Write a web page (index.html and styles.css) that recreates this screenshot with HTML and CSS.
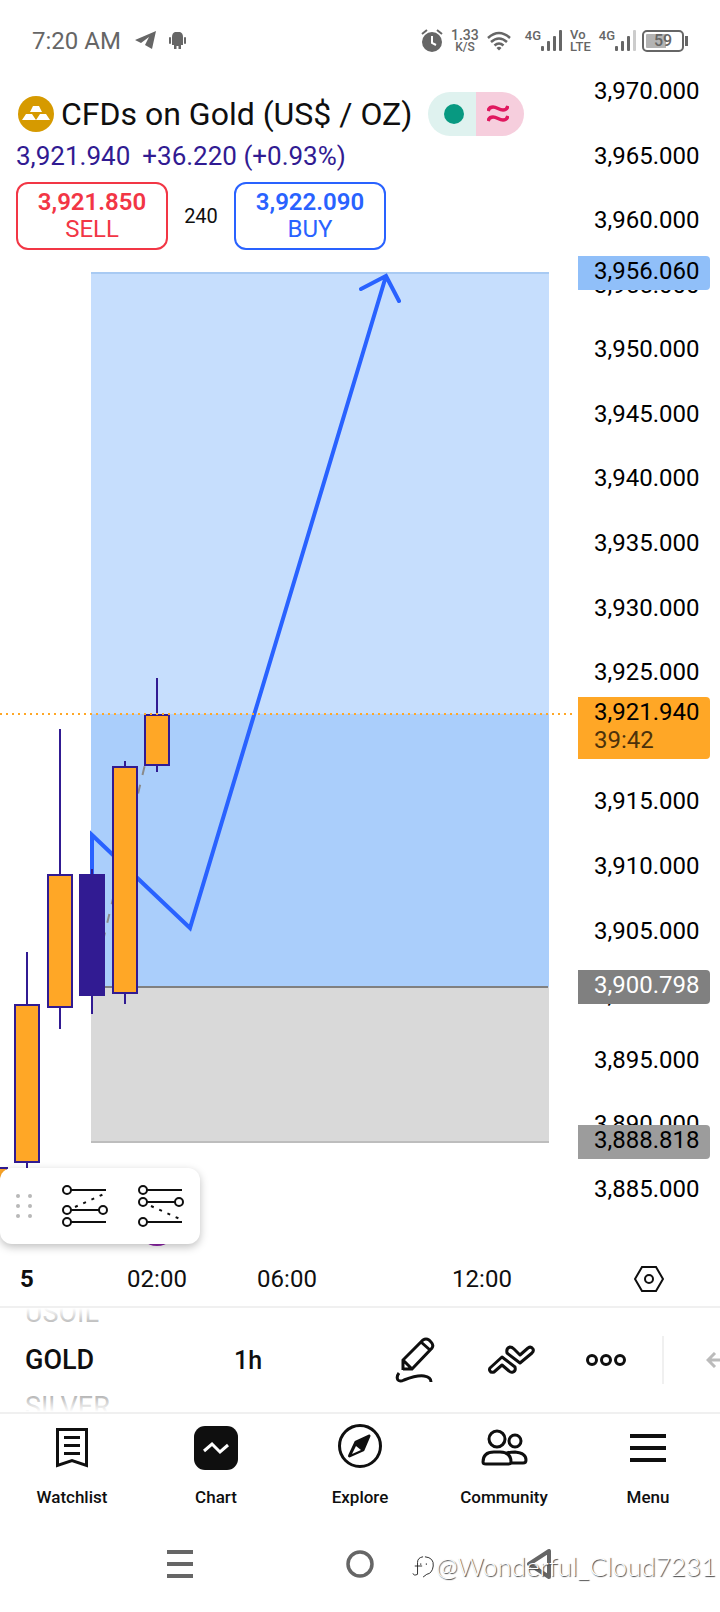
FILE: index.html
```
<!DOCTYPE html>
<html lang="en">
<head>
  <meta charset="UTF-8">
  <meta name="viewport" content="width=device-width, initial-scale=1">
  <title>GOLD 1h</title>
  <link rel="stylesheet" href="styles.css">
</head>
<body>

  <header class="status-bar">
    <time>7:20 AM</time>
    <svg class="telegram" width="21" height="19" viewBox="0 0 21 19"><path d="M0 9 L21 0 L17 18 L10 14 L14 6 L6 12 Z" fill="#666"/></svg>
    <svg width="17" height="19" viewBox="0 0 17 19" fill="#666"><path d="M3 14 V6 Q3 2 6 1 H11 Q14 2 14 6 V14 H12 V18 H9.500 V15 H7.500 V18 H5 V14 Z"/><rect x="0" y="6" width="2" height="7" rx="1"/><rect x="15" y="6" width="2" height="7" rx="1"/></svg>

    <div class="status-right">
      <svg class="alarm" width="22" height="24" viewBox="0 0 22 24" fill="none"><circle cx="11" cy="13" r="10" fill="#666"/><path d="M1 5 L6 1 M21 5 L16 1" stroke="#666" stroke-width="2"/><path d="M11 7 V14 L15 16" stroke="#fff" stroke-width="2"/></svg>
      <div class="mini speed"><b>1.33</b><span>K/S</span></div>
      <svg class="wifi" width="24" height="20" viewBox="0 0 24 20" fill="none" stroke="#666" stroke-width="2.500"><path d="M1 7 Q12 -3 23 7"/><path d="M4 11 Q12 4 20 11"/><path d="M7.500 14.500 Q12 10.500 16.500 14.500"/><path d="M9.500 17 Q12 14.500 14.500 17 L12 19.500 Z" fill="#666" stroke="none"/></svg>
      <div class="signal">
        <span>4G</span>
        <svg width="21" height="21" viewBox="0 0 21 21" fill="#666"><rect x="0" y="16" width="3" height="5" rx="1"/><rect x="6" y="11" width="3" height="10" rx="1"/><rect x="12" y="6" width="3" height="15" rx="1"/><rect x="18" y="0" width="3" height="21" rx="1"/></svg>
      </div>
      <div class="mini volte"><b>Vo</b><b>LTE</b></div>
      <div class="signal">
        <span>4G</span>
        <svg width="21" height="21" viewBox="0 0 21 21" fill="#666"><rect x="0" y="16" width="3" height="5" rx="1"/><rect x="6" y="11" width="3" height="10" rx="1"/><rect x="12" y="6" width="3" height="15" rx="1"/><rect x="18" y="0" width="3" height="21" rx="1" fill="#ccc"/></svg>
      </div>
      <div class="battery"><span>59</span></div>
    </div>
  </header>

  <main class="chart">
    <svg class="plot" viewBox="0 79 578 1171" preserveAspectRatio="xMinYMin slice">
      <!-- long position: target, current profit, stop -->
      <rect x="91" y="272" width="458" height="442" fill="#c6defd"/>
      <rect x="91" y="714" width="458" height="273" fill="#aacefb"/>
      <rect x="91" y="987" width="458" height="155" fill="#d9d9d9"/>
      <path d="M91 273 H549" stroke="#a8caf3" stroke-width="2"/>
      <path d="M91 987 H548" stroke="#808080" stroke-width="2"/>
      <path d="M91 1142 H549" stroke="#bdbdbd" stroke-width="2"/>
      <path d="M92 987 L157 714" stroke="#8a8a8a" stroke-width="2" stroke-dasharray="9 10" stroke-dashoffset="-9"/>

      <!-- forecast arrow -->
      <path d="M92 880 V835 L190 928 L386 276 M361 289 L386 276 L399 301" fill="none" stroke="#2962ff" stroke-width="4" stroke-linecap="round"/>

      <!-- candles -->
      <g fill="#ffa726" stroke="#311b92" stroke-width="2">
        <rect x="-17" y="1168" width="24" height="60"/>
        <path d="M27 952 V1180"/>
        <rect x="15" y="1005" width="24" height="157"/>
        <path d="M60 729 V1029"/>
        <rect x="48" y="875" width="24" height="132"/>
        <path d="M92 869 V1014"/>
        <rect x="80" y="875" width="24" height="120" fill="#311b92"/>
        <path d="M125 761 V1004"/>
        <rect x="113" y="767" width="24" height="226"/>
        <path d="M157 678 V772"/>
        <rect x="145" y="715" width="24" height="50"/>
      </g>
      <path d="M0 714 H574" stroke="#ffa726" stroke-width="2" stroke-dasharray="2 4"/>
      <circle cx="157" cy="1226" r="20" fill="#8e24aa"/>
    </svg>

    <section class="legend">
      <div class="title-row">
        <svg width="36" height="36" viewBox="0 0 36 36"><circle cx="18" cy="18" r="18" fill="#d69a00"/><path d="M15 10 H21 L24 16 H12 Z M8 18 H14 L18 24 H4 Z M22 18 H28 L32 24 H18 Z" fill="#fff"/><path d="M15 18 H21 L18 23 Z" fill="#d69a00"/></svg>
        <h1>CFDs on Gold (US$ / OZ)</h1>
        <div class="pill">
          <span class="pill-open"><i></i></span>
          <span class="pill-approx"><svg width="22" height="18" viewBox="0 0 22 18" fill="none" stroke="#e0185f" stroke-width="3.500"><path d="M1 6 Q2 2 6 2 C10 2 12 5 16 5 Q20 5 21 1"/><path d="M1 16 Q2 12 6 12 C10 12 12 15 16 15 Q20 15 21 11"/></svg></span>
        </div>
      </div>
      <p class="quote"><span>3,921.940</span><span>+36.220 (+0.93%)</span></p>
      <div class="trade">
        <button class="sell"><b>3,921.850</b>SELL</button>
        <span class="spread">240</span>
        <button class="buy"><b>3,922.090</b>BUY</button>
      </div>
    </section>

    <aside class="price-axis">
      <ol>
        <li>3,970.000</li>
        <li>3,965.000</li>
        <li>3,960.000</li>
        <li>3,955.000</li>
        <li>3,950.000</li>
        <li>3,945.000</li>
        <li>3,940.000</li>
        <li>3,935.000</li>
        <li>3,930.000</li>
        <li>3,925.000</li>
        <li></li>
        <li>3,915.000</li>
        <li>3,910.000</li>
        <li>3,905.000</li>
        <li>3,900.000</li>
        <li>3,895.000</li>
        <li>3,890.000</li>
        <li>3,885.000</li>
      </ol>
      <div class="tag tag-target">3,956.060</div>
      <div class="tag tag-last">3,921.940<small>39:42</small></div>
      <div class="tag tag-entry">3,900.798</div>
      <div class="tag tag-stop">3,888.818</div>
    </aside>

    <div class="draw-panel">
      <svg class="grip" width="16" height="24" viewBox="0 0 16 24" fill="#b8b8b8"><circle cx="2" cy="2" r="2"/><circle cx="14" cy="2" r="2"/><circle cx="2" cy="12" r="2"/><circle cx="14" cy="12" r="2"/><circle cx="2" cy="22" r="2"/><circle cx="14" cy="22" r="2"/></svg>
      <button aria-label="Long position">
        <svg width="46" height="42" viewBox="0 0 46 42" fill="none" stroke="#0f0f0f" stroke-width="2"><circle cx="5" cy="5" r="4"/><path d="M9 5 H44"/><circle cx="5" cy="25" r="4"/><path d="M9 25 H37"/><circle cx="41" cy="25" r="4"/><circle cx="5" cy="37" r="4"/><path d="M9 37 H44"/><path d="M13 22 L42 9" stroke-dasharray="3 6"/></svg>
      </button>
      <button aria-label="Short position">
        <svg width="46" height="42" viewBox="0 0 46 42" fill="none" stroke="#0f0f0f" stroke-width="2"><circle cx="5" cy="5" r="4"/><path d="M9 5 H44"/><circle cx="5" cy="17" r="4"/><path d="M9 17 H37"/><circle cx="41" cy="17" r="4"/><circle cx="5" cy="37" r="4"/><path d="M9 37 H44"/><path d="M13 21 L42 34" stroke-dasharray="3 6"/></svg>
      </button>
    </div>
  </main>

  <div class="time-axis">
    <b>5</b>
    <span>02:00</span>
    <span>06:00</span>
    <i></i>
    <span>12:00</span>
    <i></i>
    <button aria-label="Chart settings">
      <svg width="30" height="28" viewBox="0 0 30 28" fill="none" stroke="#0f0f0f" stroke-width="2"><path d="M8 2 H22 L29 14 L22 26 H8 L1 14 Z"/><circle cx="15" cy="14" r="4"/></svg>
    </button>
  </div>

  <div class="toolbar">
    <button class="symbols"><span>USOIL</span><strong>GOLD</strong><span>SILVER</span></button>
    <button class="interval">1h</button>
    <i></i>
    <button aria-label="Draw">
      <svg width="40" height="46" viewBox="0 0 40 46" fill="none" stroke="#0f0f0f" stroke-width="3"><path d="M8 33 V23 L28 3 Q31 1 34 3 L36 5 Q39 8 37 11 L17 32 H8 Z M8 23 L17 32 M26 5 L35 13"/><path d="M4 36 Q1 40 3 43 Q5 45 9 43 Q22 38 29 39 Q36 40 36 45"/></svg>
    </button>
    <button aria-label="Indicators">
      <svg width="48" height="30" viewBox="0 0 48 30" fill="none" stroke="#0f0f0f" stroke-width="3" stroke-linejoin="round"><path d="M3 23 L15 12 L28 22 Q29 26 26 27 Q24 28 22 26 L15 20 L7 27 Q4 28 3 26 Q2 25 3 23 Z"/><path d="M20 8 Q19 3 23 2 Q25 2 27 4 L33 10 L41 3 Q44 1 46 4 Q47 6 45 8 L33 18 Z"/></svg>
    </button>
    <button aria-label="More">
      <svg width="42" height="14" viewBox="0 0 42 14" fill="none" stroke="#0f0f0f" stroke-width="3"><circle cx="7" cy="7" r="4.500"/><circle cx="21" cy="7" r="4.500"/><circle cx="35" cy="7" r="4.500"/></svg>
    </button>
    <button class="undo" aria-label="Undo">
      <svg width="14" height="16" viewBox="0 0 14 16" fill="none" stroke="#bbb" stroke-width="3"><path d="M9 1 L2 8 L9 15 M2 8 H14"/></svg>
    </button>
  </div>

  <nav class="tabs">
    <a href="#watchlist">
      <svg width="48" height="48" viewBox="0 0 48 48" fill="none" stroke="#0f0f0f" stroke-width="3"><path d="M9.500 5.500 H38.500 V41.500 L24 36.500 L9.500 41.500 Z M16 13.500 H32 M16 21.500 H32 M16 29.500 H32"/></svg>
      Watchlist
    </a>
    <a href="#chart">
      <svg width="48" height="48" viewBox="0 0 48 48" fill="none"><rect x="2" y="2" width="44" height="44" rx="11" fill="#0f0f0f"/><path d="M12 27 L20 20 L28 28 L36 21" stroke="#fff" stroke-width="3"/></svg>
      Chart
    </a>
    <a href="#explore">
      <svg width="48" height="48" viewBox="0 0 48 48" fill="none"><circle cx="24" cy="22" r="20.500" stroke="#0f0f0f" stroke-width="3"/><path d="M33 12 L20 18 L13.500 32 L27 26 Z" fill="#0f0f0f" stroke="#0f0f0f" stroke-width="3" stroke-linejoin="round"/><path d="M20 22 L25 26 L16 30 Z" fill="#fff"/></svg>
      Explore
    </a>
    <a href="#community">
      <svg width="48" height="48" viewBox="0 0 48 48" fill="none" stroke="#0f0f0f" stroke-width="3"><circle cx="17" cy="15" r="8"/><circle cx="35" cy="17" r="6"/><path d="M14 28 H20 Q31 28 31 38 Q31 40 28 40 H6 Q3 40 3 38 Q3 28 14 28 Z M27 29 Q30 28 35 28 Q46 29 46 36 Q46 39 43 39 H30"/></svg>
      Community
    </a>
    <a href="#menu">
      <svg width="48" height="48" viewBox="0 0 48 48" fill="none" stroke="#0f0f0f" stroke-width="4"><path d="M6 12 H42 M6 24 H42 M6 36 H42"/></svg>
      Menu
    </a>
  </nav>

  <footer class="system-nav">
    <button aria-label="Recents"><svg width="26" height="28" viewBox="0 0 26 28" stroke="#666" stroke-width="4"><path d="M0 2 H26 M0 14 H26 M0 26 H26"/></svg></button>
    <button aria-label="Home"><svg width="28" height="28" viewBox="0 0 28 28" fill="none" stroke="#666" stroke-width="3.500"><circle cx="14" cy="14" r="12"/></svg></button>
    <button aria-label="Back"><svg width="26" height="30" viewBox="0 0 26 30" fill="none" stroke="#666" stroke-width="4" stroke-linejoin="round"><path d="M22 2 V28 L2 15 Z"/></svg></button>
    <div class="watermark">
      <svg width="24" height="28" viewBox="0 0 26 28" fill="none"><path d="M6 23 Q2 25 1 22 M6 23 V10 Q6 5 12 4 M3 14 H11 M14 4 Q24 5 23 14 Q22 22 16 23 L12 26" stroke="#222"/><path d="M9 12 H10 M15 12 H16" stroke="#444" stroke-width="2"/></svg>
      <span>@Wonderful_Cloud7231</span>
    </div>
  </footer>

</body>
</html>
```

FILE: styles.css
```
* {
  box-sizing: border-box;
}

body {
  margin: 0;
  background: #fff;
  color: #0f0f0f;
  font-family: Roboto, "Liberation Sans", sans-serif;
  font-size: 24px;
  overflow-x: hidden;
}

svg {
  display: block;
  flex: none;
}

button {
  font: inherit;
  color: inherit;
  background: none;
  border: 0;
  padding: 0;
  margin: 0;
}

/* Status bar */
.status-bar {
  display: flex;
  align-items: center;
  height: 79px;
  padding: 2px 32px 0;
  color: #666;
}

.telegram {
  margin: 0 13px 0 14px;
}

.status-right {
  display: flex;
  align-items: center;
  margin-left: auto;
}

.mini {
  display: flex;
  flex-direction: column;
  align-items: center;
  font-size: 13px;
  line-height: 12px;
}

.mini b {
  font-weight: 500;
}

.speed {
  margin: 0 8px;
}

.speed span {
  font-size: 12px;
  font-weight: 500;
}

.speed b {
  font-size: 14px;
}

.volte {
  align-items: flex-start;
  margin: 0 8px;
}

.wifi {
  margin-right: 14px;
}

.signal {
  display: flex;
  align-items: flex-end;
}

.signal span {
  align-self: flex-start;
  font-size: 13px;
  font-weight: 500;
  line-height: 12px;
}

.battery {
  position: relative;
  width: 42px;
  height: 22px;
  margin: 0 4px 0 6px;
  padding: 2px;
  border: 2px solid #666;
  border-radius: 5px;
  background: linear-gradient(90deg, #b3b3b3 59%, #fff 59%) content-box;
}

.battery::after {
  content: "";
  position: absolute;
  right: -6px;
  top: 4px;
  width: 3px;
  height: 10px;
  background: #666;
}

.battery span {
  display: block;
  text-align: center;
  font-size: 16px;
  font-weight: 500;
  line-height: 14px;
}

/* Chart */
.chart {
  position: relative;
  display: grid;
  grid-template-columns: 1fr 142px;
}

.plot {
  grid-area: 1 / 1;
  width: 100%;
  height: 1171px;
}

.legend {
  grid-area: 1 / 1;
  align-self: start;
  padding: 13px 0 0 16px;
}

.title-row {
  display: flex;
  align-items: center;
  height: 44px;
  padding-left: 2px;
}

h1 {
  margin: 0 16px 0 7px;
  font-size: 32px;
  font-weight: 400;
  white-space: nowrap;
}

.pill {
  display: flex;
  width: 96px;
  height: 44px;
  border-radius: 22px;
  overflow: hidden;
}

.pill span {
  display: flex;
  flex: 1;
  align-items: center;
  justify-content: center;
}

.pill-open {
  background: #dff2ef;
}

.pill-open i {
  width: 20px;
  height: 20px;
  margin-left: 4px;
  border-radius: 50%;
  background: #089981;
}

.pill-approx {
  background: #f6cedd;
}

.pill-approx svg {
  margin-right: 4px;
}

.quote {
  display: flex;
  gap: 12px;
  margin: 0;
  font-size: 26px;
  line-height: 40px;
  color: #311b92;
}

.trade {
  display: flex;
  align-items: center;
  margin-top: 6px;
}

.trade button {
  width: 152px;
  height: 68px;
  border: 2px solid;
  border-radius: 12px;
  line-height: 27px;
}

.trade button b {
  display: block;
  font-weight: 600;
}

.trade .sell {
  color: #f23645;
}

.trade .buy {
  color: #2962ff;
}

.spread {
  width: 66px;
  text-align: center;
  font-size: 20px;
}

/* Price axis */
.price-axis {
  position: relative;
  color: #000;
}

.price-axis ol {
  display: flex;
  flex-direction: column;
  justify-content: space-between;
  height: 1122px;
  margin: 0;
  padding: 0 0 0 16px;
  list-style: none;
  line-height: 24px;
}

.price-axis li {
  height: 24px;
}

.tag {
  position: absolute;
  left: 0;
  right: 10px;
  padding: 0 16px 4px;
  border-radius: 0 4px 4px 0;
  line-height: 30px;
}

.tag-target {
  top: 177px;
  background: #90bff9;
}

.tag-last {
  top: 618px;
  padding-top: 1px;
  padding-bottom: 5px;
  background: #ffa726;
  line-height: 28px;
}

.tag-last small {
  display: block;
  font-size: 24px;
  color: #4d320b;
}

.tag-entry {
  top: 891px;
  background: #808080;
  color: #fff;
}

.tag-stop {
  top: 1046px;
  background: #9c9c9c;
}

/* Drawing panel */
.draw-panel {
  position: absolute;
  left: 0;
  bottom: 6px;
  display: flex;
  align-items: center;
  gap: 30px;
  height: 76px;
  padding: 0 16px;
  border-radius: 12px;
  background: #fff;
  box-shadow: 0 3px 8px rgba(0, 0, 0, 0.25);
}

/* Time axis */
.time-axis {
  display: grid;
  grid-template-columns: 92fr 130fr 130fr 65fr 130fr 31fr 142px;
  align-items: center;
  justify-items: center;
  height: 58px;
  padding-top: 2px;
  border-bottom: 2px solid #f0f0f0;
}

.time-axis b {
  justify-self: start;
  padding-left: 20px;
}

/* Toolbar */
.toolbar {
  display: grid;
  grid-template-columns: 200fr 96fr 71fr 96fr 95fr 96fr 66fr;
  align-items: center;
  justify-items: center;
  height: 106px;
  border-bottom: 2px solid #f0f0f0;
}

.symbols {
  position: relative;
  display: flex;
  flex-direction: column;
  align-items: flex-start;
  justify-content: center;
  justify-self: stretch;
  height: 104px;
  padding-left: 25px;
  overflow: hidden;
  font-size: 27px;
  line-height: 47px;
}

.symbols span {
  color: #aaa;
}

.symbols strong {
  font-weight: 500;
}

.symbols::after {
  content: "";
  position: absolute;
  inset: 0;
  background: linear-gradient(#fff, rgba(255, 255, 255, 0) 18%, rgba(255, 255, 255, 0) 82%, #fff);
}

.interval {
  font-size: 25px;
  font-weight: 500;
}

.undo {
  display: flex;
  align-items: center;
  justify-content: flex-end;
  justify-self: end;
  width: 58px;
  height: 48px;
  border-left: 2px solid #f0f0f0;
}

/* Tabs */
.tabs {
  display: grid;
  grid-template-columns: repeat(5, 1fr);
  height: 102px;
  padding-top: 10px;
}

.tabs a {
  display: flex;
  flex-direction: column;
  align-items: center;
  gap: 15px;
  color: #0f0f0f;
  font-size: 17px;
  font-weight: 500;
  line-height: 20px;
  text-decoration: none;
}

/* System navigation */
.system-nav {
  position: relative;
  display: grid;
  grid-template-columns: repeat(3, 1fr);
  align-items: center;
  justify-items: center;
  height: 96px;
  padding: 0 12.5%;
}

.watermark {
  position: absolute;
  right: 4px;
  bottom: 28px;
  display: flex;
  align-items: center;
  font-family: Lato, sans-serif;
  font-size: 26px;
  font-weight: 300;
  line-height: 36px;
  color: #fff;
  text-shadow: 1px 1px 1px #444;
}
```
